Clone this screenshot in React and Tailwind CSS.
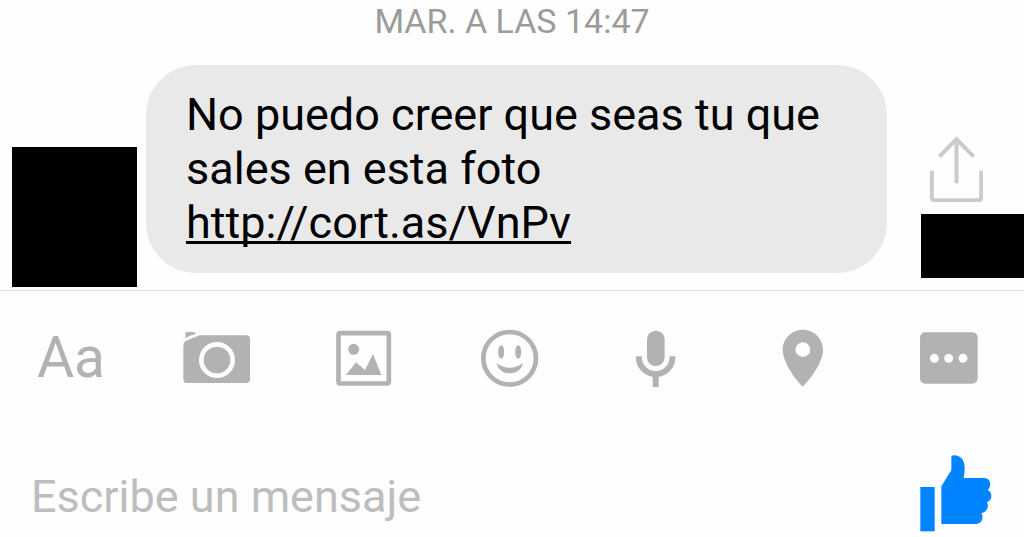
import React from 'react';

function Tool({ label, viewBox, children }) {
  return (
    <button type="button" aria-label={label} className="size-20 shrink-0">
      <svg viewBox={viewBox} className="size-full" fill="currentColor" aria-hidden="true">
        {children}
      </svg>
    </button>
  );
}

function Message() {
  return (
    <div className="flex items-end pb-[3px] pl-3">
      <div className="h-[140px] w-[125px] shrink-0 bg-black" />
      <p className="mb-[14px] ml-[9px] min-w-0 flex-1 rounded-[50px] bg-[#e9e9e9] px-10 py-[23px] text-[45px] leading-[54px] text-black">
        No puedo creer que seas tu que sales en esta foto{' '}
        <a
          href="http://cort.as/VnPv"
          className="underline decoration-[3px] underline-offset-[3px] [text-decoration-skip-ink:none]"
        >
          http://cort.as/VnPv
        </a>
      </p>
      <div className="mb-[9px] ml-[34px] w-[103px] shrink-0">
        <button type="button" aria-label="Compartir" className="mb-3 ml-2 block text-[#cbcbcb]">
          <svg
            viewBox="87 46 162 198"
            className="h-[66px] w-[54px]"
            fill="none"
            stroke="currentColor"
            strokeWidth="12"
            aria-hidden="true"
          >
            <path d="M95.500 150V230Q95.500 239 104.500 239H235Q243.500 239 243.500 230V150" />
            <path d="M169.500 188V54M118 108L169.500 55L221 108" />
          </svg>
        </button>
        <div className="h-16 bg-black" />
      </div>
    </div>
  );
}

function Toolbar() {
  return (
    <div className="flex justify-between pt-[27px] pr-[35px] pl-[31px] text-[#b2b2b2]">
      <button type="button" aria-label="Texto" className="size-20 shrink-0 text-[57px] leading-[80px]">
        Aa
      </button>
      <Tool label="Cámara" viewBox="531 24 240 240">
        <path d="M556 80V71Q556 66 561 66H582Q587 66 587 71V72Q569 76 556 85Z" />
        <path
          fillRule="evenodd"
          d="M601 76H739Q750 76 750 87V208Q750 219 739 219H561Q550 219 550 208V108Q550 98 556 94Q572 85 587 81Q593 76 601 76ZM651 96A54 54 0 1 0 651 204A54 54 0 1 0 651 96Z"
        />
        <circle cx="651" cy="150" r="40" />
      </Tool>
      <Tool label="Foto" viewBox="41 24 240 240">
        <rect x="84.500" y="69.500" width="151" height="151" rx="5" fill="none" stroke="currentColor" strokeWidth="14" />
        <circle cx="130" cy="118" r="16.500" />
        <path d="M107 195L137 157L164 180L188 132L213 195Z" />
      </Tool>
      <Tool label="Emoji" viewBox="480 24 240 240">
        <circle cx="599" cy="145" r="79" fill="none" stroke="currentColor" strokeWidth="14" />
        <ellipse cx="573.500" cy="126" rx="9" ry="20" />
        <ellipse cx="624.500" cy="126" rx="9" ry="20" />
        <path d="M559 159Q599 188 640 159Q630 190 599 190Q568 190 559 159Z" />
      </Tool>
      <Tool label="Voz" viewBox="19 24 240 240">
        <rect x="112" y="62" width="53" height="106" rx="26" />
        <path
          d="M87.500 139V142A50.500 50.500 0 0 0 188.500 142V139"
          fill="none"
          stroke="currentColor"
          strokeWidth="18"
        />
        <rect x="129" y="196" width="18" height="35" />
      </Tool>
      <Tool label="Ubicación" viewBox="458 24 240 240">
        <path
          fillRule="evenodd"
          d="M577 59C544 59 517 86 517 119C517 156 553 205 577 230C602 205 638 156 638 119C638 86 611 59 577 59ZM577.500 97A22 22 0 1 1 577.500 141A22 22 0 1 1 577.500 97Z"
        />
      </Tool>
      <Tool label="Más" viewBox="57 24 240 240">
        <path
          fillRule="evenodd"
          d="M107 67H246Q263 67 263 84V204Q263 221 246 221H107Q90 221 90 204V84Q90 67 107 67ZM133 131.500A13.500 13.500 0 1 0 133 158.500A13.500 13.500 0 1 0 133 131.500ZM176 131.500A13.500 13.500 0 1 0 176 158.500A13.500 13.500 0 1 0 176 131.500ZM219 131.500A13.500 13.500 0 1 0 219 158.500A13.500 13.500 0 1 0 219 131.500Z"
        />
      </Tool>
    </div>
  );
}

function Composer() {
  return (
    <form className="flex items-end pt-[57px] pr-8 pl-[31px]" onSubmit={(e) => e.preventDefault()}>
      <input
        type="text"
        aria-label="Escribe un mensaje"
        placeholder="Escribe un mensaje"
        className="mb-2 h-[54px] min-w-0 flex-1 bg-transparent text-[45px] leading-[54px] text-black outline-none placeholder:text-[#bdbdbd] placeholder:opacity-100"
      />
      <button type="button" aria-label="Me gusta" className="shrink-0 text-[#0084ff]">
        <svg viewBox="90 74 216 231" className="h-[77px] w-[72px]" fill="currentColor" aria-hidden="true">
          <rect x="91" y="170" width="43" height="133" />
          <path d="M154 168L184 120V80Q184 75 192 75C213 75 224 91 224 113Q224 129 221 143H283C301 143 307 166 293 180C308 185 308 210 291 216C298 229 290 246 274 249C283 263 274 281 259 281H154Z" />
        </svg>
      </button>
    </form>
  );
}

export default function App() {
  return (
    <main className="min-h-screen bg-[#fefefe] font-['Roboto',sans-serif]">
      <section className="border-b border-[#dcdcdc]">
        <time className="block pb-[23px] text-center text-[34px] leading-[42px] text-[#9b9b9b]">
          MAR. A LAS 14:47
        </time>
        <Message />
      </section>
      <Toolbar />
      <Composer />
    </main>
  );
}
